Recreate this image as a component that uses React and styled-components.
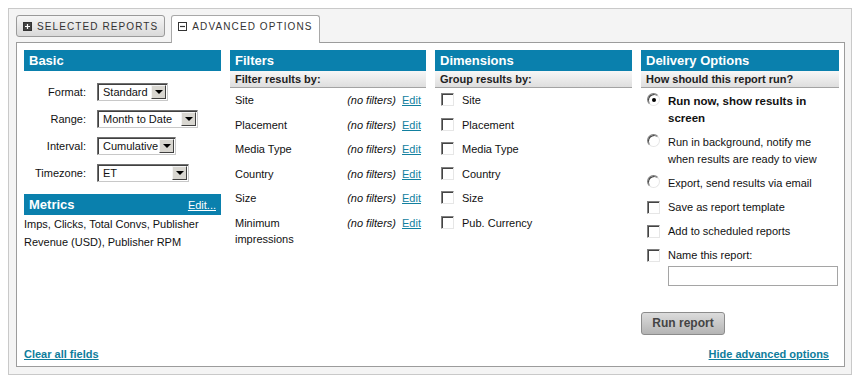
import React from 'react';
import styled, { createGlobalStyle } from 'styled-components';

const GlobalStyle = createGlobalStyle`
  body {
    margin: 0;
    font-family: "Liberation Sans", Arial, sans-serif;
    font-size: 11px;
    color: #111;
    background: #fff;
  }
`;

const Frame = styled.div`
  box-sizing: border-box;
  margin: 8px 3px 0 8px;
  height: 367px;
  background: #f4f4f4;
  border: 1px solid #c9c9c9;
  padding: 6px 6px 0 7px;
`;

const TabBar = styled.div`
  display: flex;
  align-items: flex-start;
  gap: 6px;
  height: 27px;
`;

const Tab = styled.div`
  position: relative;
  z-index: 1;
  box-sizing: border-box;
  display: flex;
  align-items: center;
  gap: 5px;
  padding: 0 6px 0 6px;
  font-size: 10px;
  letter-spacing: 1.1px;
  color: #333;
  border: 1px solid ${p => (p.$active ? '#a8a8a8' : '#9a9a9a')};
  border-radius: 3px 3px ${p => (p.$active ? '0 0' : '3px 3px')};
  height: ${p => (p.$active ? '28px' : '22px')};
  border-bottom: ${p => (p.$active ? 'none' : '1px solid #9a9a9a')};
  background: ${p => (p.$active ? '#fff' : 'linear-gradient(#f6f6f6, #d9d9d9)')};
  padding-bottom: ${p => (p.$active ? '6px' : '0')};
`;

const Panel = styled.div`
  box-sizing: border-box;
  display: flex;
  flex-direction: column;
  height: 325px;
  background: #fff;
  border: 1px solid #9c9c9c;
  padding: 7px 7px 0 7px;
`;

const Columns = styled.div`
  display: grid;
  grid-template-columns: 197px 196px 197px 198px;
  column-gap: 9px;
`;

const Column = styled.div`
  display: flex;
  flex-direction: column;
`;

const SectionHeader = styled.div`
  display: flex;
  align-items: center;
  justify-content: space-between;
  height: 21px;
  padding: 0 5px;
  margin-top: ${p => p.$gap || 0}px;
  background: #0a80ad;
  color: #fff;
  font-size: 13px;
  font-weight: bold;
`;

const HeaderLink = styled.a`
  font-size: 11px;
  font-weight: normal;
  color: #fff;
  text-decoration: underline;
`;

const SubHeader = styled.div`
  display: flex;
  align-items: center;
  height: 16px;
  padding: 0 5px;
  border-bottom: 1px solid #a3a3a3;
  background: linear-gradient(#f7f7f7, #dedede);
  color: #222;
  font-weight: bold;
  font-size: 11px;
`;

const FormGrid = styled.div`
  display: grid;
  grid-template-columns: 62px auto;
  column-gap: 11px;
  row-gap: 9px;
  align-items: center;
  padding-top: 12px;
`;

const Label = styled.div`
  text-align: right;
`;

const SelectBox = styled.div`
  box-sizing: border-box;
  display: flex;
  align-items: center;
  justify-content: space-between;
  height: 18px;
  width: ${p => p.$width}px;
  padding: 0 1px 0 5px;
  border: 1px solid;
  border-color: #707070 #c8c8c8 #c8c8c8 #707070;
  box-shadow: inset 1px 1px 0 #404040;
  background: #fff;
  font-size: 11px;
`;

const SelectArrow = styled.span`
  box-sizing: border-box;
  display: flex;
  align-items: center;
  justify-content: center;
  width: 15px;
  height: 14px;
  background: #d8d6d0;
  border: 1px solid;
  border-color: #f4f4f4 #404040 #404040 #f4f4f4;
  &::after {
    content: '';
    border-left: 4px solid transparent;
    border-right: 4px solid transparent;
    border-top: 4px solid #000;
  }
`;

const MetricsText = styled.div`
  line-height: 18px;
`;

const List = styled.div`
  padding-top: ${p => p.$top || 0}px;
`;

const FilterRow = styled.div`
  display: grid;
  grid-template-columns: 90px 1fr auto;
  column-gap: 6px;
  padding: 4px 5px 4.5px 5px;
  line-height: 16px;
`;

const Status = styled.span`
  font-style: italic;
  text-align: right;
`;

const EditLink = styled.a`
  color: #12809f;
  text-decoration: underline;
`;

const CheckRow = styled.div`
  display: flex;
  align-items: flex-start;
  gap: 8px;
  padding: ${p => (p.$option ? '0 6px 7px 6px' : '4px 6px 4.5px 6px')};
  line-height: ${p => (p.$option ? '17px' : '16px')};
  font-weight: ${p => (p.$bold ? 'bold' : 'normal')};
  font-size: ${p => (p.$bold ? '11.5px' : '11px')};
`;

const CheckBox = styled.span`
  flex: none;
  box-sizing: border-box;
  width: 13px;
  height: 13px;
  margin-top: ${p => p.$top || 1}px;
  border: 1px solid;
  border-color: #808080 #e6e6e6 #e6e6e6 #808080;
  box-shadow: inset 1px 1px 0 #444;
  background: #fff;
`;

const Radio = styled.span`
  flex: none;
  position: relative;
  box-sizing: border-box;
  width: 13px;
  height: 13px;
  margin-top: 0;
  border-radius: 50%;
  border: 1px solid;
  border-color: #808080 #e6e6e6 #e6e6e6 #808080;
  box-shadow: inset 1px 1px 0 #444;
  background: #fff;
  &::after {
    content: '';
    display: ${p => (p.$checked ? 'block' : 'none')};
    position: absolute;
    left: 4px;
    top: 4px;
    width: 4px;
    height: 4px;
    border-radius: 50%;
    background: #000;
  }
`;

const NameInput = styled.input`
  box-sizing: border-box;
  display: block;
  width: 170px;
  height: 20px;
  margin: 2px 0 0 27px;
  border: 1px solid #a5a5a5;
  background: #fff;
  font: inherit;
`;

const RunButton = styled.button`
  align-self: flex-start;
  box-sizing: border-box;
  width: 84px;
  height: 23px;
  margin-top: 26px;
  border: 1px solid #8c8c8c;
  border-radius: 3px;
  background: linear-gradient(#dcdcdc, #b4b4b4);
  color: #444;
  font-family: "Liberation Sans", Arial, sans-serif;
  font-size: 12px;
  font-weight: bold;
  padding: 0;
`;

const Footer = styled.div`
  display: flex;
  justify-content: space-between;
  margin-top: auto;
  padding: 0 8px 6px 0;
`;

const FooterLink = styled.a`
  color: #0e7d9c;
  font-weight: bold;
  text-decoration: underline;
`;

const TabIcon = ({ plus }) => (
  <svg width="9" height="9" viewBox="0 0 9 9">
    <rect x="0.5" y="0.5" width="8" height="8" fill={plus ? '#444' : '#fff'} stroke="#333" />
    <path d={plus ? 'M2 4.5h5M4.5 2v5' : 'M2 4.5h5'} stroke={plus ? '#fff' : '#333'} strokeWidth="1.2" />
  </svg>
);

const Select = ({ value, width }) => (
  <SelectBox $width={width}>
    <span>{value}</span>
    <SelectArrow />
  </SelectBox>
);

const filters = ['Site', 'Placement', 'Media Type', 'Country', 'Size', 'Minimum impressions'];
const dimensions = ['Site', 'Placement', 'Media Type', 'Country', 'Size', 'Pub. Currency'];

export default function App() {
  return (
    <>
      <GlobalStyle />
      <Frame>
        <TabBar>
          <Tab>
            <TabIcon plus />
            SELECTED REPORTS
          </Tab>
          <Tab $active>
            <TabIcon />
            ADVANCED OPTIONS
          </Tab>
        </TabBar>
        <Panel>
          <Columns>
            <Column>
              <SectionHeader>Basic</SectionHeader>
              <FormGrid>
                <Label>Format:</Label>
                <Select value="Standard" width={71} />
                <Label>Range:</Label>
                <Select value="Month to Date" width={101} />
                <Label>Interval:</Label>
                <Select value="Cumulative" width={79} />
                <Label>Timezone:</Label>
                <Select value="ET" width={92} />
              </FormGrid>
              <SectionHeader $gap={12}>
                Metrics
                <HeaderLink href="#">Edit...</HeaderLink>
              </SectionHeader>
              <MetricsText>
                Imps, Clicks, Total Convs, Publisher
                <br />
                Revenue (USD), Publisher RPM
              </MetricsText>
            </Column>

            <Column>
              <SectionHeader>Filters</SectionHeader>
              <SubHeader>Filter results by:</SubHeader>
              <List>
                {filters.map(name => (
                  <FilterRow key={name}>
                    <span>{name}</span>
                    <Status>(no filters)</Status>
                    <EditLink href="#">Edit</EditLink>
                  </FilterRow>
                ))}
              </List>
            </Column>

            <Column>
              <SectionHeader>Dimensions</SectionHeader>
              <SubHeader>Group results by:</SubHeader>
              <List>
                {dimensions.map(name => (
                  <CheckRow key={name}>
                    <CheckBox />
                    <span>{name}</span>
                  </CheckRow>
                ))}
              </List>
            </Column>

            <Column>
              <SectionHeader>Delivery Options</SectionHeader>
              <SubHeader>How should this report run?</SubHeader>
              <List $top={4.5}>
                <CheckRow $option $bold>
                  <Radio $checked />
                  <span>Run now, show results in screen</span>
                </CheckRow>
                <CheckRow $option>
                  <Radio />
                  <span>Run in background, notify me when results are ready to view</span>
                </CheckRow>
                <CheckRow $option>
                  <Radio />
                  <span>Export, send results via email</span>
                </CheckRow>
                <CheckRow $option>
                  <CheckBox $top={2} />
                  <span>Save as report template</span>
                </CheckRow>
                <CheckRow $option>
                  <CheckBox $top={2} />
                  <span>Add to scheduled reports</span>
                </CheckRow>
                <CheckRow $option style={{ paddingBottom: 0 }}>
                  <CheckBox $top={2} />
                  <span>Name this report:</span>
                </CheckRow>
                <NameInput />
              </List>
              <RunButton>Run report</RunButton>
            </Column>
          </Columns>
          <Footer>
            <FooterLink href="#">Clear all fields</FooterLink>
            <FooterLink href="#">Hide advanced options</FooterLink>
          </Footer>
        </Panel>
      </Frame>
    </>
  );
}
